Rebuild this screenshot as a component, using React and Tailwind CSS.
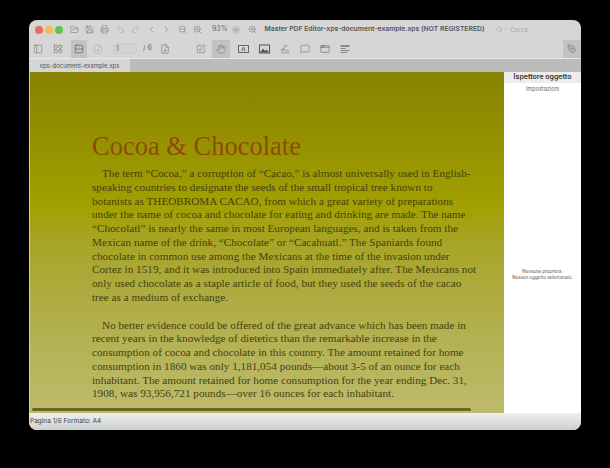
import React from 'react';
import {
  FolderOpen, Save, Printer, Undo2, Redo2, ChevronLeft, ChevronRight, ZoomOut, ZoomIn, ChevronDown,
  PanelLeft, LayoutGrid, Rows2, FilePlus, FileDown, SquarePen, Hand, Signature, MessageSquare, AppWindow, PenTool, Search,
} from 'lucide-react';

const paragraphOne = [
  'The term “Cocoa,” a corruption of “Cacao,” is almost universally used in English-',
  'speaking countries to designate the seeds of the small tropical tree known to',
  'botanists as THEOBROMA CACAO, from which a great variety of preparations',
  'under the name of cocoa and chocolate for eating and drinking are made. The name',
  '“Chocolatl” is nearly the same in most European languages, and is taken from the',
  'Mexican name of the drink, “Chocolate” or “Cacahuatl.” The Spaniards found',
  'chocolate in common use among the Mexicans at the time of the invasion under',
  'Cortez in 1519, and it was introduced into Spain immediately after. The Mexicans not',
  'only used chocolate as a staple article of food, but they used the seeds of the cacao',
  'tree as a medium of exchange.',
];

const paragraphTwo = [
  'No better evidence could be offered of the great advance which has been made in',
  'recent years in the knowledge of dietetics than the remarkable increase in the',
  'consumption of cocoa and chocolate in this country. The amount retained for home',
  'consumption in 1860 was only 1,181,054 pounds—about 3-5 of an ounce for each',
  'inhabitant. The amount retained for home consumption for the year ending Dec. 31,',
  '1908, was 93,956,721 pounds—over 16 ounces for each inhabitant.',
];

const Paragraph = ({ lines }) => (
  <div className="text-[11.2px] leading-[13.75px] text-[#45420f] whitespace-nowrap">
    {lines.map((line, i) => (
      <p key={line} className={i === 0 ? 'pl-2.5' : ''}>{line}</p>
    ))}
  </div>
);

// box with a small A in it, the text-field tool
const TextBoxIcon = () => (
  <svg width="11" height="10" viewBox="0 0 11 10" fill="none" stroke="currentColor" strokeWidth="1" className="ml-2">
    <rect x="0.5" y="1.5" width="10" height="7" />
    <path d="M3.8 7 5.5 3.2 7.2 7" />
  </svg>
);

const PictureIcon = () => (
  <svg width="11" height="10" viewBox="0 0 11 10" className="ml-2.5 text-[#555]">
    <rect x="0.5" y="1" width="10" height="8" fill="none" stroke="currentColor" />
    <path d="M1 8.5 4 4.5 6 7 7.5 5.5 10 8.5Z" fill="currentColor" />
  </svg>
);

const ListIcon = () => (
  <svg width="10" height="10" viewBox="0 0 10 10" className="ml-2.5 text-[#888]">
    <rect x="0.5" y="1" width="9" height="2" fill="currentColor" />
    <rect x="0.5" y="4" width="5" height="1" fill="currentColor" />
    <rect x="0.5" y="6" width="9" height="1" fill="currentColor" />
    <rect x="0.5" y="8" width="7" height="1" fill="currentColor" />
  </svg>
);

export default function App() {
  return (
    <div className="min-h-screen bg-black pt-5" style={{ fontFamily: 'Inter, sans-serif' }}>
      <div className="w-[552px] h-[410px] mx-auto flex flex-col rounded-lg overflow-hidden bg-[#d6d6d6] text-[#666]">
        {/* title bar */}
        <div className="h-[19px] flex items-center pl-1.5 shrink-0">
          <div className="flex gap-0.5 w-[35px]">
            <span className="w-2 h-2 rounded-full bg-[#ec6a5e]" />
            <span className="w-2 h-2 rounded-full bg-[#f4bf4f]" />
            <span className="w-2 h-2 rounded-full bg-[#61c554]" />
          </div>
          <div className="flex items-center gap-1.5 text-[#777]">
            <FolderOpen size={9} strokeWidth={1.5} />
            <Save size={9} strokeWidth={1.5} />
            <Printer size={9} strokeWidth={1.5} />
            <Undo2 size={9} strokeWidth={1.5} className="ml-px text-[#aaa]" />
            <Redo2 size={9} strokeWidth={1.5} className="text-[#aaa]" />
            <ChevronLeft size={9} strokeWidth={1.5} className="ml-px" />
            <ChevronRight size={9} strokeWidth={1.5} />
            <ZoomOut size={9} strokeWidth={1.5} className="ml-px" />
            <ZoomIn size={9} strokeWidth={1.5} />
          </div>
          <span className="ml-2.5 text-[7px] text-[#666]">93%</span>
          <span className="ml-1 w-2 h-2 rounded-sm bg-[#c4c4c4] flex items-center justify-center"><ChevronDown size={6} /></span>
          <ZoomIn size={9} strokeWidth={1.5} className="ml-2 text-[#777]" />
          <span className="ml-2 text-[6.8px] font-semibold text-[#555] whitespace-nowrap">Master PDF Editor-xps-document-example.xps (NOT REGISTERED)</span>
          <span className="ml-3 flex items-center text-[6px] text-[#aaa]"><Search size={7} /><ChevronDown size={5} /><span className="ml-0.5">Cerca</span></span>
        </div>
        {/* toolbar */}
        <div className="h-[19px] flex items-center pl-1 shrink-0 border-b border-[#eaeaea] box-content">
          <PanelLeft size={10} strokeWidth={1.25} />
          <LayoutGrid size={10} strokeWidth={1.25} className="ml-2.5" />
          <span className="ml-2 w-4 h-[18px] bg-[#c2c2c2] flex items-center justify-center text-[#444]"><Rows2 size={10} strokeWidth={1.25} /></span>
          <FilePlus size={10} strokeWidth={1.25} className="ml-1.5 text-[#aaa]" />
          <span className="ml-2.5 w-6 h-[11px] bg-[#d2d2d2] border border-[#cacaca] rounded-sm text-[7px] pl-0.5 leading-none flex items-center">1</span>
          <span className="ml-1.5 text-[7px]">/ 6</span>
          <FileDown size={10} strokeWidth={1.25} className="ml-2" />
          <SquarePen size={10} strokeWidth={1.25} className="ml-6.5" />
          <span className="ml-1.5 w-4.5 h-[18px] bg-[#c2c2c2] flex items-center justify-center text-[#777]"><Hand size={10} strokeWidth={1.25} /></span>
          <TextBoxIcon />
          <PictureIcon />
          <Signature size={10} strokeWidth={1.25} className="ml-2.5" />
          <MessageSquare size={10} strokeWidth={1.25} className="ml-2.5" />
          <AppWindow size={10} strokeWidth={1.25} className="ml-2.5 text-[#555]" />
          <ListIcon />
          <span className="ml-auto w-4.5 h-[18px] bg-[#c2c2c2] flex items-center justify-center"><PenTool size={10} strokeWidth={1.25} /></span>
        </div>
        {/* tab bar */}
        <div className="h-[13px] bg-[#bcbcbc] flex shrink-0">
          <div className="w-[101px] bg-[#d6d6d6] text-[6px] text-[#555] flex items-center justify-center">xps-document-example.xps</div>
        </div>
        {/* main */}
        <div className="flex-1 flex min-h-0">
          <div className="flex-1 relative bg-gradient-to-b from-[#878200] via-[#a3a000] via-40% to-[#bdbb6c] pt-14.5 pl-[62px] overflow-hidden border-l border-[#ccc]">
            <h1 className="text-[26.5px] leading-8 text-[#8f4a0a] mb-1.25" style={{ fontFamily: '"Liberation Serif", serif' }}>Cocoa &amp; Chocolate</h1>
            <div className="flex flex-col gap-3.5" style={{ fontFamily: '"Liberation Serif", serif' }}>
              <Paragraph lines={paragraphOne} />
              <Paragraph lines={paragraphTwo} />
            </div>
            <div className="absolute left-0.5 bottom-0.5 w-[439px] h-[3px] rounded-full bg-[#6b6528]" />
          </div>
          <div className="w-[77px] bg-white shrink-0 flex flex-col">
            <div className="h-[11px] bg-[#ededed] text-[7px] font-semibold text-[#333] flex items-center justify-center">Ispettore oggetto</div>
            <div className="text-[5.5px] leading-none text-[#666] text-center mt-1">Impostazioni</div>
            <div className="flex-1 flex flex-col justify-center items-center text-[4.5px] leading-tight text-[#555] pt-11">
              <span>Nessuna proprietà.</span>
              <span>Nessun oggetto selezionato.</span>
            </div>
          </div>
        </div>
        {/* status */}
        <div className="h-[17px] shrink-0 border-t border-[#eee] bg-gradient-to-b from-[#eeeeee] to-[#cfcfcf] text-[6.5px] text-[#444] flex items-center pl-px">Pagina 1/6 Formato: A4</div>
      </div>
    </div>
  );
}
